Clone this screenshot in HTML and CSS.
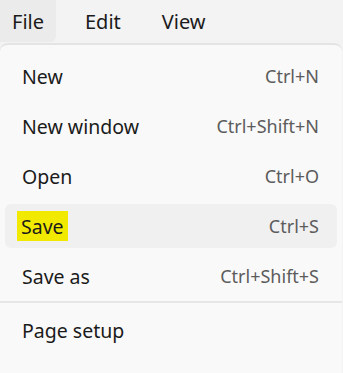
FILE: index.html
```html
<!DOCTYPE html>
<html lang="en">
  <head>
    <meta charset="UTF-8" />
    <meta name="viewport" content="width=device-width, initial-scale=1.0" />
    <title>File menu</title>
    <link rel="stylesheet" href="styles.css">
  </head>
  <body>
    <div class="menubar">
      <div class="menubar-item active">File</div>
      <div class="menubar-item">Edit</div>
      <div class="menubar-item">View</div>
    </div>
    <div class="dropdown">
      <ul class="menu-list">
        <li class="menu-item">
          <span class="label">New</span>
          <span class="shortcut">Ctrl+N</span>
        </li>
        <li class="menu-item">
          <span class="label">New window</span>
          <span class="shortcut">Ctrl+Shift+N</span>
        </li>
        <li class="menu-item">
          <span class="label">Open</span>
          <span class="shortcut">Ctrl+O</span>
        </li>
        <li class="menu-item hover">
          <span class="label"><mark>Save</mark></span>
          <span class="shortcut">Ctrl+S</span>
        </li>
        <li class="menu-item">
          <span class="label">Save as</span>
          <span class="shortcut">Ctrl+Shift+S</span>
        </li>
      </ul>
      <hr class="separator" />
      <ul class="menu-list">
        <li class="menu-item">
          <span class="label">Page setup</span>
        </li>
        <li class="menu-item">
          <span class="label">Print</span>
          <span class="shortcut">Ctrl+P</span>
        </li>
      </ul>
    </div>
  </body>
</html>
```

FILE: styles.css
```css
* {
  margin: 0;
  padding: 0;
  box-sizing: border-box;
  font-family: "Noto Sans", "Open Sans", sans-serif;
}
body {
  background: #f3f3f3;
  color: #1b1b1b;
  overflow: hidden;
}
.menubar {
  display: flex;
  height: 43px;
}
.menubar-item {
  height: 42px;
  padding: 0 12px;
  margin-right: 17px;
  display: flex;
  align-items: center;
  font-size: 20px;
}
.menubar-item.active {
  background: #ebebeb;
  border-bottom-right-radius: 6px;
}
.dropdown {
  margin-right: 1px;
  padding-top: 6px;
  background: #f9f9f9;
  border-top: 2px solid #e4e4e4;
  border-radius: 8px 8px 0 0;
}
.menu-list {
  list-style: none;
  display: flex;
  flex-direction: column;
  gap: 6px;
  padding: 3px 5px;
}
.menu-item {
  height: 44px;
  padding: 0 18px 0 17px;
  display: flex;
  align-items: center;
  justify-content: space-between;
  border-radius: 6px;
}
.menu-item.hover {
  background: #f0f0f0;
}
.menu-item .label {
  font-size: 19.5px;
}
.menu-item .shortcut {
  font-size: 18px;
  color: #5c5c5c;
}
.menu-item mark {
  background: #f2e900;
  color: inherit;
  padding: 2px 4px 1px 4px;
  margin-left: -5px;
}
.separator {
  border: none;
  height: 2px;
  background: #e6e6e6;
  margin: 0 0 2px;
}
```
